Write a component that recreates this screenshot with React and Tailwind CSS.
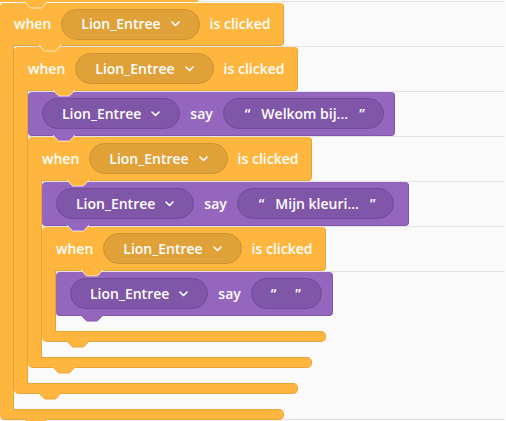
import React from 'react';

// Scratch-style stacked "when clicked" / "say" blocks over a lined workspace

const Chevron = () => (
  <svg width="9" height="6" viewBox="0 0 9 6" className="shrink-0">
    <path d="M1 1 L4.5 4.5 L8 1" fill="none" stroke="white" strokeWidth="1.6" strokeLinecap="round" strokeLinejoin="round" />
  </svg>
);

// the little tab that hangs under a block and sits in the notch of the next one
const Tab = ({ fill, stroke, className }) => (
  <svg width="22" height="7" viewBox="0 0 22 7" className={`absolute z-20 ${className}`}>
    <path d="M0 0 L4.5 5 Q5.2 6 6.5 6 L15.5 6 Q16.8 6 17.5 5 L22 0" fill={fill} stroke={stroke} strokeWidth="1" />
  </svg>
);

const ORANGE = '#ffb63e';
const ORANGE_EDGE = '#e9a437';
const PURPLE = '#9466bd';
const PURPLE_EDGE = '#8257ab';
const LIGHT = 'rgba(255,255,255,0.75)';

const Dropdown = ({ purple }) => (
  <div
    className={
      purple
        ? 'flex h-[31px] shrink-0 items-center gap-[10px] rounded-full border border-[#72499b] bg-[#7f56a8] pl-[19px] pr-[19px]'
        : 'flex h-[31px] shrink-0 items-center gap-[10px] rounded-full border border-[#cd9231] bg-[#e0a139] pl-[19px] pr-[19px]'
    }
  >
    <span>Lion_Entree</span>
    <Chevron />
  </div>
);

const WhenHeader = ({ first }) => (
  <div
    className={`relative flex ${first ? 'h-[43px]' : 'h-[44px]'} w-[284px] shrink-0 items-center gap-[10px] rounded-t-[4px] rounded-br-[4px] border-r border-b border-[#e9a437] bg-[#ffb63e] pl-[14px]`}
  >
    <span>when</span>
    <Dropdown />
    <span>is clicked</span>
    <Tab fill={ORANGE} stroke={LIGHT} className="left-[39px] top-full" />
  </div>
);

const WhenC = ({ first, children }) => (
  <div className="flex flex-col items-start">
    <WhenHeader first={first} />
    <div className="flex">
      <div className="relative z-[1] -my-px w-[14px] shrink-0 border-r border-[#e9a437] bg-[#ffb63e]" />
      <div className="flex flex-col items-start gap-px pt-px pb-[15px]">{children}</div>
    </div>
    <div className="relative h-[11px] w-[284px] rounded-r-[5px] rounded-bl-[5px] border-y border-r border-[#e9a437] bg-[#ffb63e]">
      <Tab fill={ORANGE} stroke={ORANGE_EDGE} className="left-[25px] top-full" />
    </div>
  </div>
);

const SayBlock = ({ text, wide, last }) => (
  <div
    className={`relative flex h-[44px] ${wide ? 'w-[367px]' : 'w-[277px]'} shrink-0 items-center gap-[10px] rounded-[4px] border-r border-b border-[#8257ab] bg-[#9466bd] pl-[14px]`}
  >
    <Dropdown purple />
    <span>say</span>
    {text ? (
      <div className="flex h-[31px] shrink-0 items-center rounded-full border border-[#72499b] bg-[#7f56a8] pl-[21px] pr-[18px]">
        <span>“</span>
        <span className="mx-[11px]">{text}</span>
        <span>”</span>
      </div>
    ) : (
      <div className="flex h-[31px] shrink-0 items-center rounded-full border border-[#72499b] bg-[#7f56a8] pl-[19px] pr-[20px]">
        <span>“</span>
        <span className="w-[19px]" />
        <span>”</span>
      </div>
    )}
    <Tab fill={PURPLE} stroke={last ? PURPLE_EDGE : LIGHT} className="left-[25px] top-full" />
  </div>
);

export default function App() {
  return (
    <div className="relative h-[421px] w-[506px] overflow-hidden bg-[#fafafa] font-['Open_Sans',sans-serif] text-[14px] font-semibold leading-none text-white">
      {/* workspace lines */}
      <div className="absolute inset-0 flex w-[505px] flex-col pt-px">
        <div className="h-[45px] border-t border-[#e3e3e3]" />
        <div className="h-[45px] border-t border-[#e3e3e3]" />
        <div className="h-[45px] border-t border-[#e3e3e3]" />
        <div className="h-[45px] border-t border-[#e3e3e3]" />
        <div className="h-[45px] border-t border-[#e3e3e3]" />
        <div className="h-[45px] border-t border-[#e3e3e3]" />
        <div className="h-[149px] border-y border-[#e3e3e3]" />
      </div>

      {/* blocks */}
      <div className="relative flex flex-col items-start">
        <div className="relative h-[2px] w-[198px] bg-[#ffb63e]">
          <Tab fill={ORANGE} stroke={LIGHT} className="left-[25px] top-full" />
        </div>
        <div className="mt-px">
          <WhenC first>
            <WhenC>
              <SayBlock wide text="Welkom bij..." />
              <WhenC>
                <SayBlock wide text="Mijn kleuri..." />
                <WhenC>
                  <SayBlock last text="" />
                </WhenC>
              </WhenC>
            </WhenC>
          </WhenC>
        </div>
      </div>
    </div>
  );
}
